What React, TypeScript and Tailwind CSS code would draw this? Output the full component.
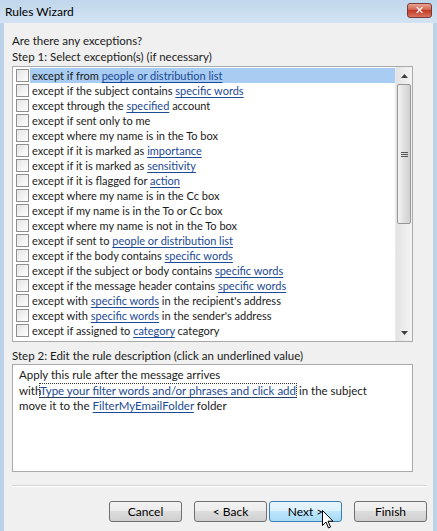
import React from "react";

type Seg = string | { l: string };
const rows: Seg[][] = [
  ["except if from ", { l: "people or distribution list" }],
  ["except if the subject contains ", { l: "specific words" }],
  ["except through the ", { l: "specified" }, " account"],
  ["except if sent only to me"],
  ["except where my name is in the To box"],
  ["except if it is marked as ", { l: "importance" }],
  ["except if it is marked as ", { l: "sensitivity" }],
  ["except if it is flagged for ", { l: "action" }],
  ["except where my name is in the Cc box"],
  ["except if my name is in the To or Cc box"],
  ["except where my name is not in the To box"],
  ["except if sent to ", { l: "people or distribution list" }],
  ["except if the body contains ", { l: "specific words" }],
  ["except if the subject or body contains ", { l: "specific words" }],
  ["except if the message header contains ", { l: "specific words" }],
  ["except with ", { l: "specific words" }, " in the recipient's address"],
  ["except with ", { l: "specific words" }, " in the sender's address"],
  ["except if assigned to ", { l: "category" }, " category"],
];

const Link = ({ children }: { children: React.ReactNode }) => (
  <span className="text-[#1c4a94] underline decoration-[#1c4a94] underline-offset-2">{children}</span>
);

const Check = () => (
  <div className="w-[13px] h-[13px] border border-[#8f8f8f] bg-gradient-to-br from-[#e4e4e4] to-white shrink-0" />
);

const Btn = ({ label, hot }: { label: string; hot?: boolean }) => (
  <div
    className={
      "w-[73px] h-[21px] rounded-[3px] border flex items-center justify-center text-[12px] text-black " +
      (hot
        ? "border-[#3c7fb1] bg-[linear-gradient(#eaf6fd_0%,#d9f0fc_50%,#bee6fd_50%,#a7d9f5_100%)]"
        : "border-[#707070] bg-[linear-gradient(#f2f2f2_0%,#ebebeb_50%,#dddddd_50%,#cfcfcf_100%)]")
    }
  >
    {label}
  </div>
);

export default function App() {
  return (
    <div
      className="w-[437px] h-[531px] bg-[#bcd2e9] flex flex-col overflow-hidden relative"
      style={{ fontFamily: 'Lato, "Open Sans", sans-serif' }}
    >
      {/* Title bar */}
      <div className="h-[23px] shrink-0 flex items-center justify-between pl-[5px] pr-[5px] bg-[linear-gradient(#c0d6ec,#d3e3f3)]">
        <span className="text-[12px] text-black">Rules Wizard</span>
        <div className="w-[25px] h-[15px] rounded-[3px] border border-[#7a3b36] bg-[linear-gradient(#e8a493,#cf5a46_50%,#c13a26_50%,#d7735f)] flex items-center justify-center mb-[2px]">
          <span className="text-white text-[11px] font-bold leading-none" style={{ fontFamily: '"DejaVu Sans", sans-serif' }}>✕</span>
        </div>
      </div>
      {/* Body */}
      <div className="flex-1 ml-[4px] mr-[4px] bg-[#f0f0f0] flex flex-col pl-[8px] pr-[6px] text-[11.5px] text-[#1a1a1a] leading-[15px]">
        <div className="mt-[10px]">Are there any exceptions?</div>
        <div className="mt-[1px]">Step 1: Select exception(s) (if necessary)</div>
        {/* List box */}
        <div className="mt-[2px] w-[401px] h-[276px] border border-[#a9a9a9] bg-white flex text-[11px]">
          <div className="flex-1 pt-[1px] flex flex-col">
            {rows.map((r, i) => (
              <div key={i} className="h-[15px] flex items-center">
                <div className="w-[17px] flex justify-center pl-[2px]">
                  <Check />
                </div>
                <div className={"flex-1 h-[15px] pl-[2px] whitespace-nowrap " + (i === 0 ? "bg-[#a8ccf2]" : "")}>
                  {r.map((s, j) =>
                    typeof s === "string" ? <span key={j}>{s}</span> : <Link key={j}>{s.l}</Link>
                  )}
                </div>
              </div>
            ))}
          </div>
          {/* Scrollbar */}
          <div className="w-[17px] bg-[linear-gradient(90deg,#e3e3e3,#f4f4f4)] flex flex-col border-l border-[#eaeaea]">
            <div className="h-[17px] flex items-center justify-center">
              <svg width="7" height="4" viewBox="0 0 7 4"><path d="M0 4 L3.5 0 L7 4 Z" fill="#404040" /></svg>
            </div>
            <div className="mx-[1px] h-[140px] rounded-[2px] border border-[#979797] bg-[linear-gradient(90deg,#f3f3f3,#e0e0e0_50%,#d0d0d0)] flex items-center justify-center">
              <div className="flex flex-col gap-[1px]">
                <div className="w-[7px] h-[1px] bg-[#555]" />
                <div className="w-[7px] h-[1px] bg-[#555]" />
                <div className="w-[7px] h-[1px] bg-[#555]" />
              </div>
            </div>
            <div className="flex-1" />
            <div className="h-[17px] flex items-center justify-center">
              <svg width="7" height="4" viewBox="0 0 7 4"><path d="M0 0 L3.5 4 L7 0 Z" fill="#404040" /></svg>
            </div>
          </div>
        </div>
        <div className="mt-[6px]">Step 2: Edit the rule description (click an underlined value)</div>
        <div className="mt-[1px] w-[401px] h-[108px] border border-[#a9a9a9] bg-white pl-[6px] pt-[2px] leading-[15.5px]">
          <div>Apply this rule after the message arrives</div>
          <div className="whitespace-nowrap">
            with<span className="outline outline-1 outline-dotted outline-[#333] outline-offset-0"><Link>Type your filter words and/or phrases and click add</Link></span> in the subject
          </div>
          <div>
            move it to the <Link>FilterMyEmailFolder</Link> folder
          </div>
        </div>
        <div className="mt-[13px] h-[2px] border-t border-[#d5d5d5] border-b border-b-white w-[415px]" />
        <div className="mt-[14px] flex items-center pl-[97px]">
          <Btn label="Cancel" />
          <div className="w-[12px]" />
          <Btn label="< Back" />
          <div className="w-[2px]" />
          <Btn label="Next >" hot />
          <div className="w-[12px]" />
          <Btn label="Finish" />
        </div>
      </div>
      {/* Cursor */}
      <svg className="absolute left-[322px] top-[510px]" width="12" height="19" viewBox="0 0 12 19">
        <path d="M0.5 0.5 L0.5 15.5 L4 12 L6.5 18 L8.5 17 L6 11.2 L11 11.2 Z" fill="white" stroke="black" strokeWidth="1" strokeLinejoin="round" />
      </svg>
    </div>
  );
}
